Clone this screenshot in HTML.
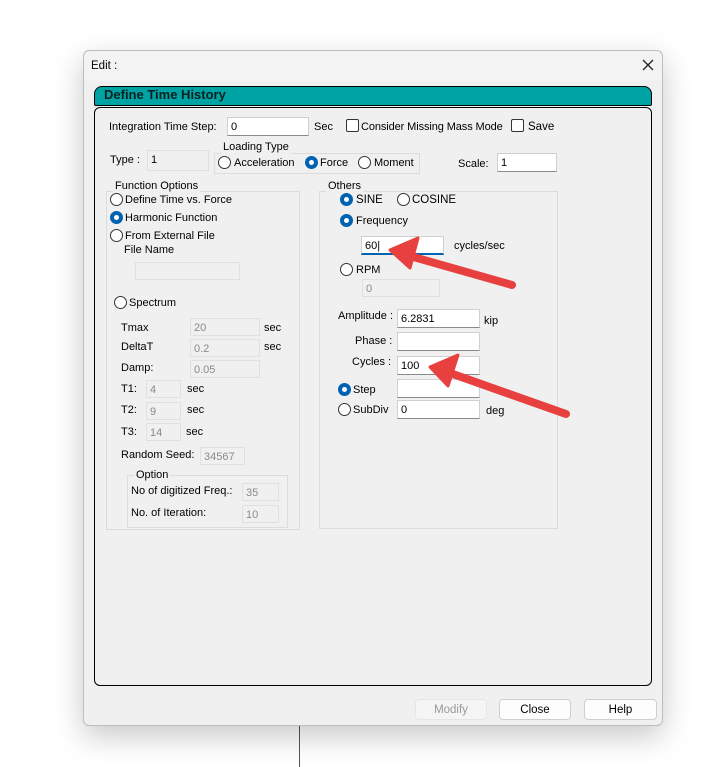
<!DOCTYPE html>
<html><head><meta charset="utf-8"><style>
*{box-sizing:border-box;margin:0;padding:0}
body{width:709px;height:767px;background:#fff;position:relative;overflow:hidden;font-family:"Liberation Sans",sans-serif;font-size:11px;color:#000}
.a{position:absolute;line-height:14px;white-space:nowrap}
.dlg{position:absolute;left:83px;top:50px;width:580px;height:676px;background:#f0f0f0;border:1px solid #bdbdbd;border-radius:6px;box-shadow:0 10px 30px rgba(0,0,0,.22)}
.tb{position:absolute;left:84px;top:51px;width:578px;height:30px;background:#f3f3f3;border-radius:6px 6px 0 0}
.in{position:absolute;background:#fff;border:1px solid #d0d0d0;border-bottom:1px solid #8a8a8a;height:19px;padding:2px 3px;line-height:14px}
.dis{position:absolute;background:#f0f0f0;border:1px solid #e0e0e0;height:18px;padding:2px 3px;line-height:14px;color:#8a8a8a}
.grp{position:absolute;border:1px solid #dcdcdc}
.gl{position:absolute;background:#f0f0f0;padding:0 2px;line-height:13px}
.r{position:absolute;width:13px;height:13px;border:1px solid #333;border-radius:50%;background:#fff}
.r.on{background:#0063b1;border-color:#0063b1}
.r.on::after{content:"";position:absolute;left:3px;top:3px;width:5px;height:5px;border-radius:50%;background:#fff}
.cb{position:absolute;width:13px;height:13px;border:1px solid #333;border-radius:2px;background:#fff}
.btn{position:absolute;top:699px;height:21px;border:1px solid #cfcfcf;border-radius:4px;background:#fdfdfd;text-align:center;line-height:20px;font-size:11.5px}
</style></head><body>
<div style="position:absolute;left:299px;top:725px;width:1px;height:42px;background:#555"></div>
<div class="dlg"></div>
<div class="tb"></div>
<div class="a" style="left:91px;top:59px;font-size:11.5px">Edit :</div>
<svg style="position:absolute;left:642px;top:59px" width="12" height="12"><path d="M1 1L11 11M11 1L1 11" stroke="#222" stroke-width="1.3"/></svg>
<div style="position:absolute;left:94px;top:86px;width:558px;height:20px;background:#00a3a3;border:1px solid #000;border-radius:8px 8px 2px 2px"></div>
<div class="a" style="left:104px;top:88px;font-weight:bold;font-size:13px;color:#082020">Define Time History</div>
<div style="position:absolute;left:94px;top:107px;width:558px;height:579px;border:1px solid #000;border-radius:6px"></div>

<div class="a" style="left:109px;top:120px">Integration Time Step:</div>
<div class="in" style="left:227px;top:117px;width:82px">0</div>
<div class="a" style="left:314px;top:120px">Sec</div>
<div class="cb" style="left:346px;top:119px"></div>
<div class="a" style="left:361px;top:120px;font-size:11px;letter-spacing:-0.1px">Consider Missing Mass Mode</div>
<div class="cb" style="left:511px;top:119px"></div>
<div class="a" style="left:528px;top:120px;font-size:11.5px">Save</div>

<div class="a" style="left:110px;top:153px">Type :</div>
<div class="dis" style="left:147px;top:150px;width:62px;height:21px;color:#000">1</div>
<div class="grp" style="left:214px;top:153px;width:206px;height:21px"></div>
<div class="gl" style="left:221px;top:141px">Loading Type</div>
<div class="r" style="left:218px;top:156px"></div><div class="a" style="left:234px;top:156px">Acceleration</div>
<div class="r on" style="left:305px;top:156px"></div><div class="a" style="left:320px;top:156px">Force</div>
<div class="r" style="left:358px;top:156px"></div><div class="a" style="left:374px;top:156px">Moment</div>
<div class="a" style="left:458px;top:157px">Scale:</div>
<div class="in" style="left:497px;top:153px;width:60px">1</div>

<div class="grp" style="left:106px;top:191px;width:194px;height:339px"></div>
<div class="gl" style="left:113px;top:180px">Function Options</div>
<div class="r" style="left:110px;top:193px"></div><div class="a" style="left:125px;top:193px">Define Time vs. Force</div>
<div class="r on" style="left:110px;top:211px"></div><div class="a" style="left:125px;top:211px">Harmonic Function</div>
<div class="r" style="left:110px;top:229px"></div><div class="a" style="left:125px;top:229px">From External File</div>
<div class="a" style="left:124px;top:243px">File Name</div>
<div class="dis" style="left:135px;top:262px;width:105px"></div>
<div class="r" style="left:114px;top:296px"></div><div class="a" style="left:129px;top:296px">Spectrum</div>
<div class="a" style="left:121px;top:321px">Tmax</div><div class="dis" style="left:190px;top:318px;width:70px">20</div><div class="a" style="left:264px;top:321px">sec</div>
<div class="a" style="left:121px;top:340px">DeltaT</div><div class="dis" style="left:190px;top:339px;width:70px">0.2</div><div class="a" style="left:264px;top:340px">sec</div>
<div class="a" style="left:121px;top:361px">Damp:</div><div class="dis" style="left:190px;top:360px;width:70px">0.05</div>
<div class="a" style="left:121px;top:382px">T1:</div><div class="dis" style="left:146px;top:380px;width:35px">4</div><div class="a" style="left:187px;top:382px">sec</div>
<div class="a" style="left:121px;top:403px">T2:</div><div class="dis" style="left:146px;top:402px;width:35px">9</div><div class="a" style="left:187px;top:403px">sec</div>
<div class="a" style="left:121px;top:425px">T3:</div><div class="dis" style="left:146px;top:423px;width:35px">14</div><div class="a" style="left:186px;top:425px">sec</div>
<div class="a" style="left:121px;top:448px">Random Seed:</div><div class="dis" style="left:200px;top:447px;width:45px">34567</div>
<div class="grp" style="left:127px;top:475px;width:161px;height:53px"></div>
<div class="gl" style="left:134px;top:469px">Option</div>
<div class="a" style="left:131px;top:484px">No of digitized Freq.:</div><div class="dis" style="left:242px;top:483px;width:37px">35</div>
<div class="a" style="left:131px;top:506px">No. of Iteration:</div><div class="dis" style="left:242px;top:505px;width:37px">10</div>

<div class="grp" style="left:319px;top:191px;width:239px;height:338px"></div>
<div class="gl" style="left:326px;top:180px">Others</div>
<div class="r on" style="left:340px;top:193px"></div><div class="a" style="left:356px;top:193px;font-size:11.5px">SINE</div>
<div class="r" style="left:397px;top:193px"></div><div class="a" style="left:412px;top:193px;font-size:11.5px">COSINE</div>
<div class="r on" style="left:340px;top:214px"></div><div class="a" style="left:356px;top:214px">Frequency</div>
<div class="in" style="left:361px;top:236px;width:83px;border-bottom:2px solid #0063b1">60|</div>
<div class="a" style="left:454px;top:239px">cycles/sec</div>
<div class="r" style="left:340px;top:263px"></div><div class="a" style="left:356px;top:263px">RPM</div>
<div class="dis" style="left:362px;top:279px;width:78px">0</div>
<div class="a" style="left:338px;top:309px">Amplitude :</div><div class="in" style="left:397px;top:309px;width:83px">6.2831</div><div class="a" style="left:484px;top:314px">kip</div>
<div class="a" style="left:355px;top:334px">Phase :</div><div class="in" style="left:397px;top:332px;width:83px"></div>
<div class="a" style="left:352px;top:355px">Cycles :</div><div class="in" style="left:397px;top:356px;width:83px">100</div>
<div class="r on" style="left:338px;top:383px"></div><div class="a" style="left:353px;top:383px">Step</div><div class="in" style="left:397px;top:379px;width:83px"></div>
<div class="r" style="left:338px;top:403px"></div><div class="a" style="left:353px;top:403px">SubDiv</div><div class="in" style="left:397px;top:400px;width:83px">0</div><div class="a" style="left:486px;top:404px">deg</div>

<svg style="position:absolute;left:0;top:0" width="709" height="767">
<g fill="#e8403f" stroke="#e8403f" stroke-linecap="round" stroke-linejoin="round">
<line x1="512" y1="285" x2="410" y2="256" stroke-width="8"/>
<polygon points="390,250 418,238 410,268" stroke-width="3"/>
<line x1="566" y1="414" x2="450" y2="373" stroke-width="8"/>
<polygon points="430,367 458,355 448,386" stroke-width="3"/>
</g></svg>

<div class="btn" style="left:415px;width:72px;color:#9a9a9a;background:#f5f5f5;border-color:#e6e6e6">Modify</div>
<div class="btn" style="left:499px;width:72px">Close</div>
<div class="btn" style="left:584px;width:73px">Help</div>
</body></html>
